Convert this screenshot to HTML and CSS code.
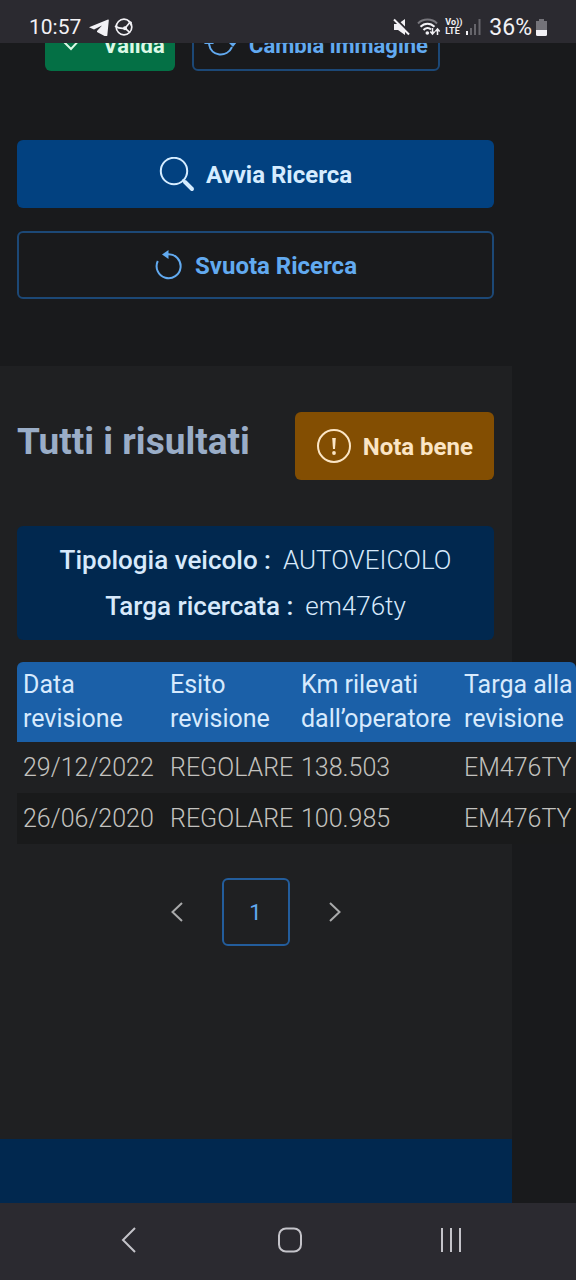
FILE: index.html
```html
<!DOCTYPE html>
<html lang="it">
<head>
<meta charset="utf-8">
<meta name="viewport" content="width=device-width, initial-scale=1">
<title>Verifica revisioni</title>
<link rel="stylesheet" href="styles.css">
</head>
<body>
<header class="status">
  <div class="status-group">
    <time class="clock">10:57</time>
    <svg class="ic-telegram" viewBox="0 0 20 17" width="20" height="17" aria-hidden="true"><path fill="currentColor" d="M19 .5 0 8.200l5 2.300 8-4-5 5.500v1l8.500 4.500c1 .4 1.600 0 1.800-1L19.800 1.500c.1-.8-.2-1.200-.8-1z"/></svg>
    <svg viewBox="0 0 20 18" width="20" height="18" aria-hidden="true"><g fill="none" stroke="currentColor" stroke-width="1.700"><circle cx="10" cy="9" r="7.800"/><path d="M1 8c3 2 6 3 10 2.200l5-6M11 10.200l5 4.500"/></g><circle cx="11" cy="10.200" r="2" fill="currentColor"/><path fill="currentColor" d="m13 2 5 2-1 4z"/></svg>
  </div>
  <div class="status-group">
    <svg class="ic-mute" viewBox="0 0 17 18" width="17" height="18" aria-hidden="true"><path fill="currentColor" d="M1 6h4l7-5v16l-7-5H1z"/><path stroke="#2b2a30" stroke-width="2" d="m3 1 14 14"/><path stroke="currentColor" stroke-width="2" d="m1 1.500 15 15"/></svg>
    <svg class="ic-wifi" viewBox="0 0 24 18" width="24" height="18" aria-hidden="true"><g fill="none" stroke="currentColor" stroke-width="2"><path stroke="#77767c" d="M1 5.500c5-5.200 14-5.200 19 0"/><path d="M3.500 8.800c4-4.200 10-4.200 14 0M6.500 12c2.200-2.600 5.500-2.600 7.500-.5"/><path stroke-width="1.500" d="M15.500 10v6m-2.200-2.500 2.200 2.500 2.200-2.500M20.500 17v-6m-2.200 2.500 2.200-2.500 2.200 2.500"/></g><circle cx="10.300" cy="15" r="1.800" fill="currentColor"/></svg>
    <span class="volte"><span>Vo))</span><span>LTE</span></span>
    <svg class="ic-signal" viewBox="0 0 15 16" width="15" height="16" aria-hidden="true"><path fill="currentColor" d="M0 12h2v4H0z"/><path fill="#66656b" d="M4 9h2v7H4zM8 5h2v11H8zM12.500 0h2v16h-2z"/></svg>
    <span class="battery-text">36%</span>
    <svg viewBox="0 0 11 17" width="11" height="17" aria-hidden="true"><path fill="#747379" d="M3 0h5v2h3v10H0V2h3z"/><path fill="currentColor" d="M0 11h11v4.500q0 1.500-1.500 1.500h-8Q0 17 0 15.500z"/></svg>
  </div>
</header>

<main class="screen">
  <div class="page">
    <div class="captcha-actions">
      <button class="btn btn-small btn-success" type="button">
        <svg viewBox="0 0 32 32" width="32" height="32" aria-hidden="true"><path fill="none" stroke="currentColor" stroke-width="2" d="m7 11 9 9L27 8"/></svg>
        Valida
      </button>
      <button class="btn btn-small btn-outline" type="button">
        <svg viewBox="0 0 34 32" width="34" height="32" aria-hidden="true"><path fill="none" stroke="currentColor" stroke-width="2" d="M5 15c2 13 18 14 23 3M29 12C27 0 11 0 6 9"/><path fill="currentColor" d="m0 15 5-6 5 6zM24 13h9l-4 5z"/></svg>
        Cambia immagine
      </button>
    </div>

    <div class="search-actions">
      <button class="btn btn-primary" type="button">
        <svg viewBox="0 0 36 36" width="36" height="36" aria-hidden="true"><circle cx="15" cy="14" r="13.200" fill="none" stroke="currentColor" stroke-width="2"/><path fill="none" stroke="currentColor" stroke-width="4" stroke-linecap="round" d="m26 25 7 7"/><path stroke="currentColor" stroke-width="2" d="m23.500 22.500 3 3"/></svg>
        Avvia Ricerca
      </button>
      <button class="btn btn-outline" type="button">
        <svg class="ic-reset" viewBox="0 0 30 32" width="30" height="32" aria-hidden="true"><path fill="none" stroke="currentColor" stroke-width="2" d="M3.800 11A12 12 0 1 0 14 4.200"/><path fill="currentColor" d="m8 4.500 6.500-4.500v9z"/></svg>
        Svuota Ricerca
      </button>
    </div>

    <section class="results">
      <div class="results-head">
        <h2>Tutti i risultati</h2>
        <button class="btn btn-warning" type="button">
          <svg viewBox="0 0 36 36" width="36" height="36" aria-hidden="true"><circle cx="18" cy="17" r="16" fill="none" stroke="currentColor" stroke-width="2"/><path fill="currentColor" d="M16.200 9h3.600l-.8 11h-2z"/><circle cx="18" cy="24" r="1.900" fill="currentColor"/></svg>
          Nota bene
        </button>
      </div>

      <dl class="summary">
        <div><dt>Tipologia veicolo :</dt><dd>AUTOVEICOLO</dd></div>
        <div><dt>Targa ricercata :</dt><dd>em476ty</dd></div>
      </dl>

      <div class="table-wrap">
        <table>
          <thead>
            <tr><th class="col-date" scope="col">Data revisione</th><th class="col-outcome" scope="col">Esito revisione</th><th class="col-km" scope="col">Km rilevati dall’operatore</th><th scope="col">Targa alla revisione</th></tr>
          </thead>
          <tbody>
            <tr><td>29/12/2022</td><td>REGOLARE</td><td>138.503</td><td>EM476TY</td></tr>
            <tr><td>26/06/2020</td><td>REGOLARE</td><td>100.985</td><td>EM476TY</td></tr>
          </tbody>
        </table>
      </div>

      <nav class="pager" aria-label="Pagine">
        <button type="button" aria-label="Precedente"><svg viewBox="0 0 12 20" width="12" height="20" aria-hidden="true"><path d="m11 1-9.500 9L11 19"/></svg></button>
        <a class="current" href="#" aria-current="page">1</a>
        <button type="button" aria-label="Successiva"><svg viewBox="0 0 12 20" width="12" height="20" aria-hidden="true"><path d="m1 1 9.500 9L1 19"/></svg></button>
      </nav>
    </section>
    <footer class="site-footer"></footer>
  </div>
</main>

<nav class="system-nav" aria-label="Sistema">
  <button type="button" aria-label="Indietro"><svg viewBox="0 0 28 28" width="28" height="28" aria-hidden="true"><path d="M20 2 8 14l12 12"/></svg></button>
  <button type="button" aria-label="Home"><svg viewBox="0 0 28 28" width="28" height="28" aria-hidden="true"><rect x="3" y="2.500" width="22" height="23" rx="7"/></svg></button>
  <button type="button" aria-label="Recenti"><svg viewBox="0 0 28 28" width="28" height="28" aria-hidden="true"><path d="M5 2v24M14 2v24M23 2v24"/></svg></button>
</nav>
</body>
</html>
```
FILE: styles.css
```css
* {
  box-sizing: border-box;
}

body {
  margin: 0;
  height: 100vh;
  display: flex;
  flex-direction: column;
  overflow: hidden;
  background: #191a1c;
  color: #c3c2bf;
  font-family: Roboto, "Liberation Sans", sans-serif;
  font-size: 24px;
}

button {
  font: inherit;
  color: inherit;
  background: none;
  border: 0;
  padding: 0;
}

svg {
  flex: none;
}

/* Phone status bar */
.status {
  flex: none;
  display: flex;
  justify-content: space-between;
  padding: 11px 29px 0;
  height: 43px;
  background: #2b2a30;
  color: #f2f1f5;
}

.status-group {
  display: flex;
  align-items: center;
  height: 32px;
  font-size: 21px;
}

.ic-telegram {
  margin: 0 5px 0 8px;
}

.ic-wifi {
  margin: 0 4px 0 7px;
}

.volte {
  display: flex;
  flex-direction: column;
  font-size: 9px;
  font-weight: 700;
  line-height: 9px;
}

.ic-signal {
  margin: 0 8px 0 4px;
}

.battery-text {
  margin-right: 4px;
  font-size: 23px;
}

/* Scrolled page */
.screen {
  flex: 1;
  min-height: 0;
  overflow: hidden;
}

.page {
  display: flex;
  flex-direction: column;
  min-height: 100%;
  margin: -32px 64px 0 0;
}

.btn {
  display: flex;
  align-items: center;
  justify-content: center;
  gap: 11px;
  height: 68px;
  padding-top: 2px;
  border-radius: 6px;
  font-weight: 700;
  white-space: nowrap;
}

.btn-small {
  height: 60px;
  padding: 8px 10px 0;
  font-size: 22px;
}

.btn-success {
  width: 130px;
  gap: 16px;
  background: #047045;
  color: #dcf8e6;
}

.btn-primary {
  background: #024180;
  color: #d5ecff;
}

.btn-outline {
  border: 2px solid #1c4876;
  color: #62aaf0;
}

.btn-warning {
  padding: 2px 21px 0;
  background: #834e02;
  color: #fbe5c5;
}

.captcha-actions {
  display: flex;
  gap: 17px;
  padding-left: 45px;
}

.search-actions {
  display: grid;
  gap: 23px;
  margin-top: 69px;
  padding: 0 18px 0 17px;
}

.results {
  margin-top: 67px;
  padding: 46px 18px 193px 17px;
  background: #1f2022;
}

.results-head {
  display: flex;
  align-items: center;
  justify-content: space-between;
}

h2 {
  margin: 0;
  padding-bottom: 8px;
  color: #9aadc7;
  font-size: 37px;
  line-height: 40px;
  font-weight: 700;
}

.summary {
  display: grid;
  margin: 46px 0 22px;
  padding: 11px 17px;
  border-radius: 6px;
  background: #01284f;
  color: #d7e9fb;
  font-size: 26px;
  line-height: 46px;
}

.summary div {
  display: flex;
  justify-content: center;
  gap: 12px;
}

.summary dt {
  font-weight: 500;
}

.summary dd {
  margin: 0;
  font-weight: 300;
}

/* The results table is wider than its section */
.table-wrap {
  margin-right: -82px;
  border-radius: 6px 6px 0 0;
  overflow: hidden;
}

table {
  width: 100%;
  table-layout: fixed;
  border-collapse: collapse;
  font-size: 25px;
}

th,
td {
  padding: 0 0 0 6px;
  text-align: left;
  white-space: nowrap;
}

th {
  height: 80px;
  background: #1b60a8;
  color: #d7eafd;
  font-weight: 400;
  line-height: 34px;
  white-space: normal;
}

td {
  height: 51px;
  font-weight: 300;
}

tbody tr {
  background: #1f2022;
}

tbody tr:nth-child(even) {
  background: #191a1b;
}

.col-date {
  width: 147px;
}

.col-outcome {
  width: 131px;
}

.col-km {
  width: 163px;
}

.pager {
  display: flex;
  justify-content: center;
  gap: 11px;
  margin-top: 34px;
}

.pager button,
.pager a {
  display: flex;
  align-items: center;
  justify-content: center;
  width: 68px;
  height: 68px;
}

.pager svg {
  fill: none;
  stroke: #a9aaab;
  stroke-width: 2;
}

.pager .current {
  border: 2px solid #235d9c;
  border-radius: 6px;
  color: #62aaf0;
  font-size: 22px;
  text-decoration: none;
}

.site-footer {
  flex: 1;
  min-height: 96px;
  background: #01284f;
}

/* Phone navigation bar */
.system-nav {
  flex: none;
  display: flex;
  justify-content: center;
  align-items: center;
  gap: 133px;
  height: 77px;
  padding: 0 0 3px 3px;
  background: #2b2a30;
}

.system-nav svg {
  display: block;
  fill: none;
  stroke: #c4c3c9;
  stroke-width: 2;
}
```
